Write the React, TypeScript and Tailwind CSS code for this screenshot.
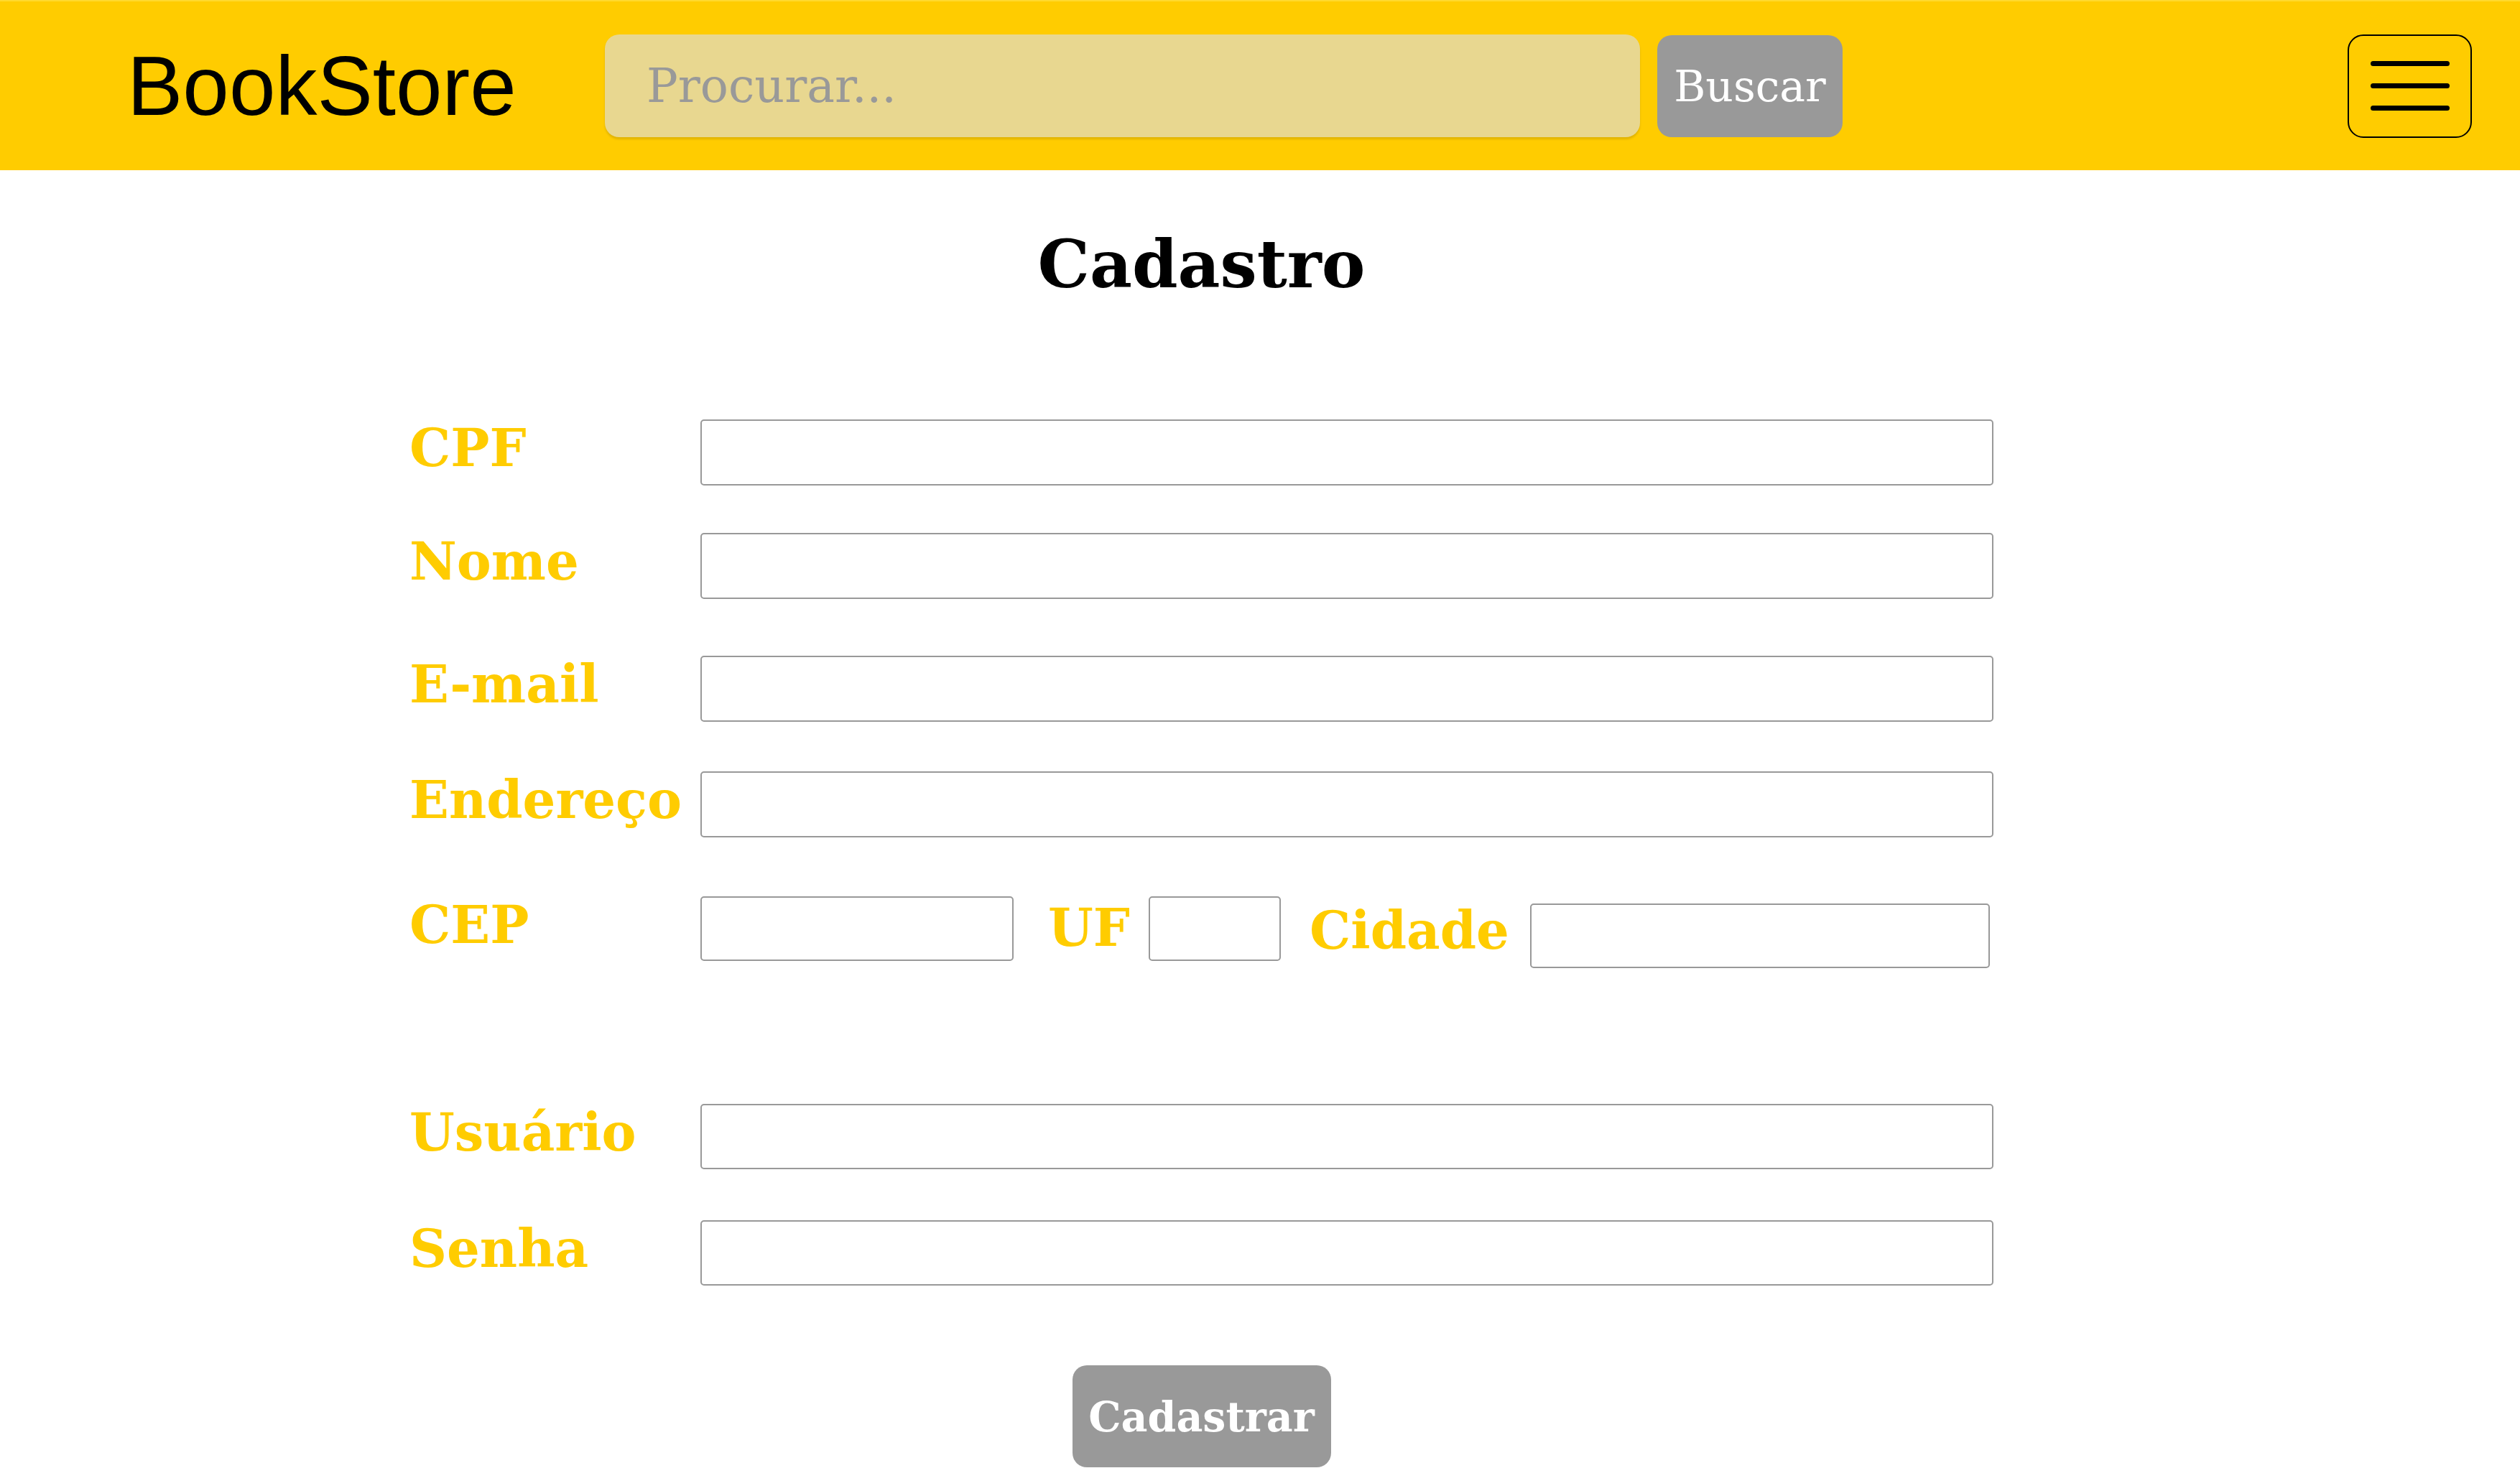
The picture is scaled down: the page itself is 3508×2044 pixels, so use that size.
import React from 'react'

const label = "font-['DejaVu_Serif',serif] font-bold text-[72px] leading-none text-[#ffcc00]"
const field = 'bg-white border-2 border-[#999999] rounded-[5px] outline-none'

function Row({ name, type = 'text', className = '' }: { name: string; type?: string; className?: string }) {
  return (
    <div className={`flex items-start ${className}`}>
      <label className={`w-[405px] pt-[4px] ${label}`}>{name}</label>
      <input type={type} className={`w-[1800px] h-[92px] ${field}`} />
    </div>
  )
}

export default function App() {
  return (
    <div className="min-h-screen w-full bg-white">
      {/* Navbar */}
      <header className="h-[237px] bg-[#ffcc00] border-t-2 border-[#ffd92e] flex items-center pl-[177px] pr-[67px]">
        <span className="w-[665px] font-['Liberation_Sans',sans-serif] text-[116px] leading-none text-black">
          BookStore
        </span>
        <input
          type="text"
          placeholder="Procurar..."
          className="w-[1441px] h-[143px] rounded-[20px] bg-[#e8d790] pl-[58px] outline-none shadow-[0_3px_3px_rgba(0,0,0,0.12)] font-['DejaVu_Serif',serif] text-[65px] text-black placeholder:text-[#999999]"
        />
        <button className="ml-[24px] w-[258px] h-[142px] rounded-[20px] bg-[#999999] text-white font-['DejaVu_Serif',serif] text-[60px] leading-none">
          Buscar
        </button>
        <button className="ml-auto w-[173px] h-[144px] rounded-[22px] border-2 border-black flex flex-col items-center justify-center gap-[24px]">
          <span className="block w-[110px] h-[7px] rounded-full bg-black" />
          <span className="block w-[110px] h-[7px] rounded-full bg-black" />
          <span className="block w-[110px] h-[7px] rounded-full bg-black" />
        </button>
      </header>

      {/* Form */}
      <main className="ml-[570px] w-[2205px] flex flex-col">
        <h1 className="mt-[86px] text-center font-['DejaVu_Serif',serif] font-bold text-[91px] leading-none text-black">
          Cadastro
        </h1>

        <Row name="CPF" className="mt-[170px]" />
        <Row name="Nome" className="mt-[66px]" />
        <Row name="E-mail" className="mt-[79px]" />
        <Row name="Endereço" className="mt-[69px]" />

        {/* CEP / UF / Cidade */}
        <div className="mt-[82px] h-[100px] flex items-start">
          <label className={`w-[405px] pt-[4px] ${label}`}>CEP</label>
          <input type="text" className={`w-[436px] h-[90px] ${field}`} />
          <label className={`w-[188px] pl-[48px] mt-[8px] ${label}`}>UF</label>
          <input type="text" className={`w-[184px] h-[90px] ${field}`} />
          <label className={`w-[347px] pl-[40px] mt-[12px] ${label}`}>Cidade</label>
          <input type="text" className={`mt-[10px] w-[640px] h-[90px] ${field}`} />
        </div>

        <div className="mt-[189px] flex items-start">
          <label className={`w-[405px] pt-[4px] ${label}`}>Usuário</label>
          <input type="text" className={`w-[1800px] h-[91px] ${field}`} />
        </div>
        <div className="mt-[71px] flex items-start">
          <label className={`w-[405px] pt-[4px] ${label}`}>Senha</label>
          <input type="password" className={`w-[1800px] h-[91px] ${field}`} />
        </div>

        <div className="mt-[111px] flex justify-center">
          <button className="w-[360px] h-[142px] rounded-[20px] bg-[#999999] text-white font-['DejaVu_Serif',serif] font-bold text-[57px] leading-none">
            Cadastrar
          </button>
        </div>
      </main>
    </div>
  )
}
